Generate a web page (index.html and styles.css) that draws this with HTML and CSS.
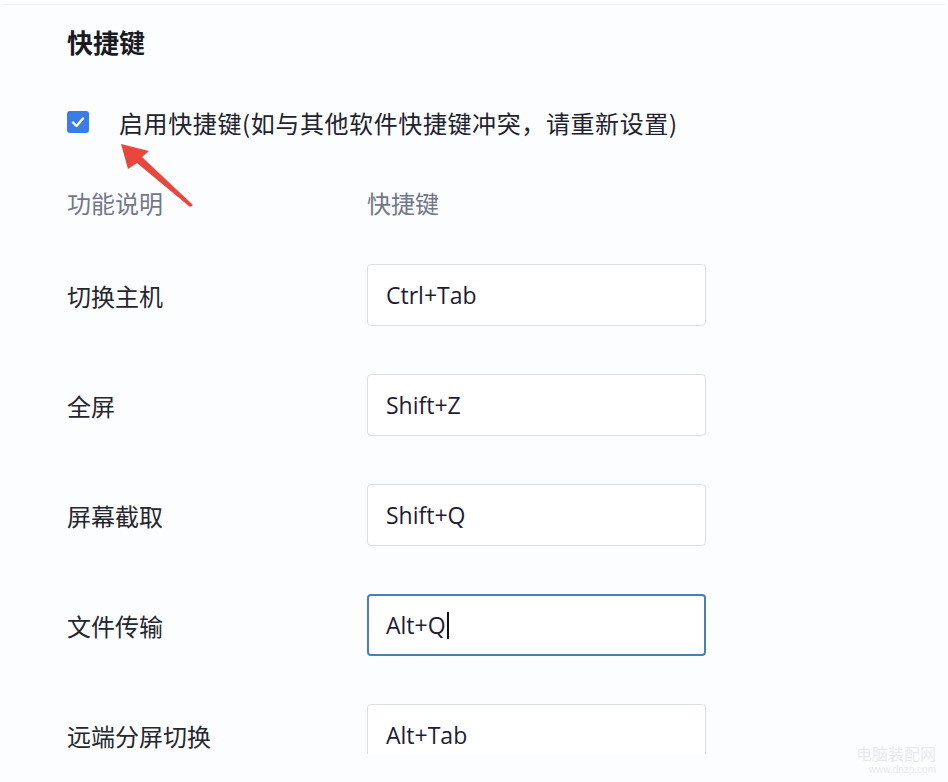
FILE: index.html
```html
<!DOCTYPE html>
<html lang="zh-CN">
<head>
  <meta charset="UTF-8">
  <title>快捷键设置</title>
  <meta name="viewport" content="width=device-width, initial-scale=1.0">
  <link rel="stylesheet" href="styles.css">
</head>
<body>

  <div class="panel">
    <h2 class="title">快捷键</h2>

    <label class="enable-row">
      <span class="checkbox">
        <svg viewBox="0 0 22 22" width="22" height="22">
          <path d="M6 11.5 L9.5 15 L16 7.5" fill="none" stroke="#fff" stroke-width="2.4" stroke-linecap="round" stroke-linejoin="round"/>
        </svg>
      </span>
      <span class="enable-text">启用快捷键(如与其他软件快捷键冲突，请重新设置)</span>
    </label>

    <div class="head-row">
      <span class="col-name">功能说明</span>
      <span class="col-key">快捷键</span>
    </div>

    <div class="key-list">
      <div class="key-row">
        <span class="key-name">切换主机</span>
        <div class="key-box">Ctrl+Tab</div>
      </div>
      <div class="key-row">
        <span class="key-name">全屏</span>
        <div class="key-box">Shift+Z</div>
      </div>
      <div class="key-row">
        <span class="key-name">屏幕截取</span>
        <div class="key-box">Shift+Q</div>
      </div>
      <div class="key-row">
        <span class="key-name">文件传输</span>
        <div class="key-box focused">Alt+Q<span class="caret"></span></div>
      </div>
      <div class="key-row">
        <span class="key-name">远端分屏切换</span>
        <div class="key-box">Alt+Tab</div>
      </div>
    </div>

    <!-- 标注箭头 -->
    <svg class="arrow" width="948" height="782" viewBox="0 0 948 782">
      <polygon points="121,144 149,151 142,157 193,205 190,207 137,163 128,169" fill="#e8473d"/>
    </svg>
  </div>

  <div class="watermark">
    <span class="wm-name">电脑装配网</span>
    <span class="wm-url">www.dnzp.com</span>
  </div>

</body>
</html>
```

FILE: styles.css
```css
body {
  position: relative;
  margin: 0;
  height: 782px;
  background-color: #fcfdff;
  font-family: "Noto Sans CJK SC", "Noto Sans", sans-serif;
  overflow: hidden;
}

.panel {
  position: relative;
  height: 750px;
  overflow: hidden;
  margin: 4px 3px 0 3px;
  padding: 0 0 0 64px;
  border-top: 1px solid #eef0f4;
  box-sizing: border-box;
}

.title {
  margin: 0;
  padding-top: 19px;
  font-size: 26px;
  line-height: 36px;
  font-weight: 700;
  color: #1a1a24;
}

.enable-row {
  display: flex;
  align-items: center;
  height: 44px;
  margin-top: 40px;
}

.checkbox {
  display: flex;
  width: 22px;
  height: 22px;
  background-color: #3a7ce8;
  border-radius: 3px;
}

.enable-text {
  margin-left: 30px;
  font-size: 24px;
  letter-spacing: 0.6px;
  color: #22222e;
}

.head-row {
  display: flex;
  height: 30px;
  line-height: 30px;
  margin-top: 44px;
  font-size: 24px;
  color: #72778a;
}

.col-name {
  width: 300px;
}

.key-list {
  display: flex;
  flex-direction: column;
  gap: 48px;
  margin-top: 46px;
}

.key-row {
  display: flex;
  align-items: center;
  height: 62px;
}

.key-name {
  width: 300px;
  font-size: 24px;
  color: #26262f;
}

.key-box {
  display: flex;
  align-items: center;
  width: 339px;
  height: 62px;
  padding-left: 18px;
  box-sizing: border-box;
  background-color: #fff;
  border: 1px solid #dcdfe5;
  border-radius: 4px;
  font-family: "Open Sans", "Noto Sans", sans-serif;
  font-size: 23px;
  color: #1d1b38;
}

.key-box.focused {
  border: 2px solid #4b80ae;
  padding-left: 17px;
}

.caret {
  display: inline-block;
  width: 2px;
  height: 27px;
  margin-left: 1px;
  background-color: #111;
}

.arrow {
  position: absolute;
  left: -3px;
  top: -5px;
  pointer-events: none;
}

.watermark {
  position: absolute;
  right: 12px;
  bottom: 6px;
  display: flex;
  flex-direction: column;
  align-items: flex-end;
  gap: 2px;
  color: #e8eaee;
}

.wm-name {
  font-size: 16px;
  line-height: 18px;
}

.wm-url {
  font-family: "Liberation Sans", sans-serif;
  font-size: 10px;
  line-height: 12px;
}
```
